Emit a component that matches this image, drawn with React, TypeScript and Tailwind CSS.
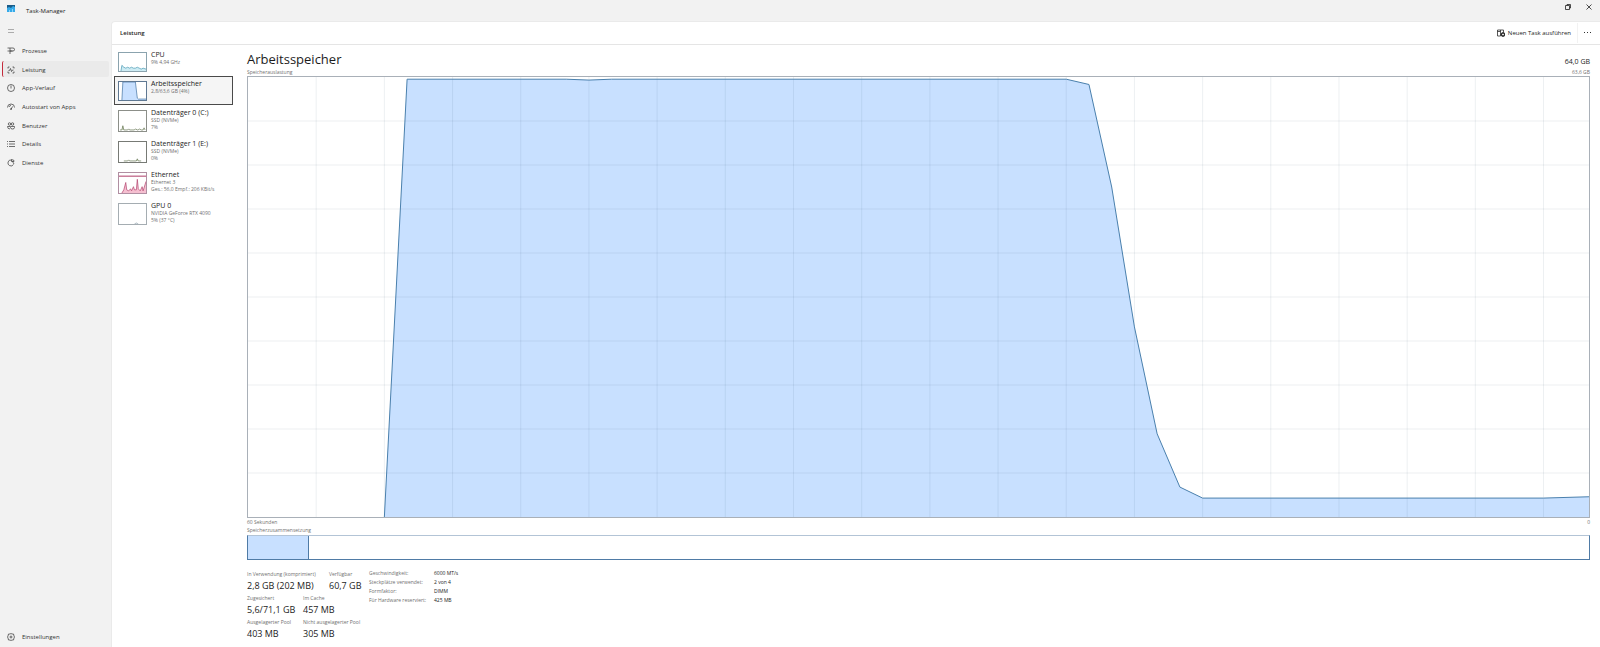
import type { ReactNode } from "react";

interface NavItem {
  label: string;
  icon: ReactNode;
}

interface Device {
  name: string;
  lines: string[];
  border: string;
  stroke: string;
  fill: string;
  line: string;
  area: string;
  limit?: string;
}

interface Stat {
  label: string;
  value: string;
}

const Icon = ({ children }: { children: ReactNode }) => (
  <svg
    className="size-[8px] shrink-0"
    viewBox="0 0 16 16"
    fill="none"
    stroke="currentColor"
    strokeWidth="1.4"
    aria-hidden="true"
  >
    {children}
  </svg>
);

const navItems: NavItem[] = [
  {
    label: "Prozesse",
    icon: (
      <Icon>
        <path d="M1 2h11a3 3 0 0 1 0 6H1M6 2v12M6 8h5" />
      </Icon>
    ),
  },
  {
    label: "Leistung",
    icon: (
      <Icon>
        <path d="M2 5V2h3M11 2h3v3M14 11v3h-3M5 14H2v-3M3 9h2l2-4 2 6 2-3h2" />
      </Icon>
    ),
  },
  {
    label: "App-Verlauf",
    icon: (
      <Icon>
        <circle cx="8" cy="8" r="7" />
        <path d="M8 3v6" />
      </Icon>
    ),
  },
  {
    label: "Autostart von Apps",
    icon: (
      <Icon>
        <path d="M1 9a7 7 0 0 1 14 0M4 8a4 4 0 0 1 4-3M8 13l3-6" />
        <circle cx="8" cy="12" r="1" />
      </Icon>
    ),
  },
  {
    label: "Benutzer",
    icon: (
      <Icon>
        <circle cx="5" cy="4" r="2.500" />
        <circle cx="11" cy="4" r="2.500" />
        <path d="M6 14q-5 0-5-5h5M7 9h8v2q0 3-4 3t-4-3z" />
      </Icon>
    ),
  },
  {
    label: "Details",
    icon: (
      <Icon>
        <path d="M0 3h2M4 3h12M0 8h2M4 8h12M0 13h2M4 13h12" />
      </Icon>
    ),
  },
  {
    label: "Dienste",
    icon: (
      <Icon>
        <path d="M9 2A6 6 0 1 0 13 11M9 1v4h5V3l-2-1zM11 5l3 5" />
      </Icon>
    ),
  },
];

const devices: Device[] = [
  {
    name: "CPU",
    lines: ["9% 4,94 GHz"],
    border: "border-[#8ba3ae]",
    stroke: "#3f94b0",
    fill: "#cdebf3",
    line: "M2 19L3 13L5 15L7 16L9 15L11 16L13 15L15 16L17 16L19 15L21 16L23 17L25 16L28 17",
    area: "M2 19L3 13L5 15L7 16L9 15L11 16L13 15L15 16L17 16L19 15L21 16L23 17L25 16L28 17V19Z",
  },
  {
    name: "Arbeitsspeicher",
    lines: ["2,8/63,6 GB (4%)"],
    border: "border-[#5f7892]",
    stroke: "#3d6d9e",
    fill: "#c8e0ff",
    line: "M3 19L4 0H17L19 17L20 18H28",
    area: "M3 19L4 0H17L19 17L20 18H28V19Z",
  },
  {
    name: "Datenträger 0 (C:)",
    lines: ["SSD (NVMe)", "7%"],
    border: "border-[#8c8f89]",
    stroke: "#657551",
    fill: "#dce7cf",
    line: "M1 18H3L4 14L5 18H9L10 17L11 18H16L17 17L19 18H20L21 17L23 18H25L26 16L27 18",
    area: "M3 18L4 14L5 18Z",
  },
  {
    name: "Datenträger 1 (E:)",
    lines: ["SSD (NVMe)", "0%"],
    border: "border-[#777a75]",
    stroke: "#657551",
    fill: "#dce7cf",
    line: "M5 18H9L10 17L11 18H18L19 16L20 18H23",
    area: "M18 18L19 16L20 18Z",
  },
  {
    name: "Ethernet",
    lines: ["Ethernet 3", "Ges.: 56,0 Empf.: 206 KBit/s"],
    border: "border-[#b08fa2]",
    stroke: "#b3446f",
    fill: "#f5bfd0",
    line: "M3 19L5 16L7 9L8 16L10 17L12 15L13 17L15 13L16 16L18 16L19 6L20 15L22 17L24 13L25 17L27 11L28 8",
    area: "M3 19L5 16L7 9L8 16L10 17L12 15L13 17L15 13L16 16L18 16L19 6L20 15L22 17L24 13L25 17L27 11L28 8V19Z",
    limit: "M0 3H28",
  },
  {
    name: "GPU 0",
    lines: ["NVIDIA GeForce RTX 4090", "5% (37 °C)"],
    border: "border-[#a5adb2]",
    stroke: "#9aa8b0",
    fill: "#e5edf1",
    line: "M16 19L18 18L20 19",
    area: "M16 19L18 18L20 19Z",
  },
];

const statRows: Stat[][] = [
  [
    { label: "In Verwendung (komprimiert)", value: "2,8 GB (202 MB)" },
    { label: "Verfügbar", value: "60,7 GB" },
  ],
  [
    { label: "Zugesichert", value: "5,6/71,1 GB" },
    { label: "Im Cache", value: "457 MB" },
  ],
  [
    { label: "Ausgelagerter Pool", value: "403 MB" },
    { label: "Nicht ausgelagerter Pool", value: "305 MB" },
  ],
];

const specs: Stat[] = [
  { label: "Geschwindigkeit:", value: "6000 MT/s" },
  { label: "Steckplätze verwendet:", value: "2 von 4" },
  { label: "Formfaktor:", value: "DIMM" },
  { label: "Für Hardware reserviert:", value: "425 MB" },
];

// one sample per second, x in samples and y in tenths of a percent from the top
const usage =
  "6,1000 7,5 14,5 15,7 16,5 36,5 37,17 38,250 39,568 40,811 41,932 42,957 57,957 59,954";

const TitleBar = () => (
  <header className="flex h-[21px] shrink-0 items-center pl-[7px]">
    <svg className="mb-[5px] h-[7px] w-[8px]" viewBox="0 0 8 7" aria-hidden="true">
      <path d="M0 0h8v3H0z" fill="#1a5b87" />
      <path d="M0 3l2-1 2 1 2-2 2 1v5H0z" fill="#36a9e8" />
      <path d="M2 5h1v2H2zM5 4h1v3H5z" fill="#8bd5fa" />
    </svg>
    <span className="mt-[2px] ml-[11px] text-[6px]">Task-Manager</span>
    <div className="mb-[7px] ml-auto flex gap-[15px] pr-[8px]">
      <button aria-label="Verkleinern">
        <svg className="size-[6px]" viewBox="0 0 12 12" fill="none" stroke="#222" strokeWidth="1.6">
          <path d="M1 3h8v8H1zM4 3V1h7v7H9" />
        </svg>
      </button>
      <button aria-label="Schließen">
        <svg className="size-[6px]" viewBox="0 0 12 12" fill="none" stroke="#222" strokeWidth="1.6">
          <path d="M1 1l10 10M11 1L1 11" />
        </svg>
      </button>
    </div>
  </header>
);

const Sidebar = () => (
  <aside className="flex w-[111px] shrink-0 flex-col text-[#333]">
    <button className="flex h-[20px] items-center pl-[7px] text-[#999]" aria-label="Navigation öffnen">
      <svg className="size-[8px]" viewBox="0 0 8 8" stroke="currentColor" aria-hidden="true">
        <path d="M1 2.500h6M1 5.500h6" strokeWidth="0.8" />
      </svg>
    </button>
    <nav className="grid h-[131px] grid-rows-7">
      {navItems.map(({ label, icon }) => (
        <a
          key={label}
          href="#"
          className={`my-px mr-[2px] ml-[2px] flex items-center gap-[7px] rounded-[2px] border-l pt-px pl-[4px] text-[6px] leading-[10px] whitespace-nowrap ${
            label === "Leistung" ? "border-[#c42b3c] bg-[#eaeaea]" : "border-transparent"
          }`}
        >
          {icon}
          {label}
        </a>
      ))}
    </nav>
    <a
      href="#"
      className="mt-auto mb-[3px] flex h-[14px] items-center gap-[7px] pl-[7px] text-[6px]"
    >
      <Icon>
        <path d="M6 2l2-1 2 1 3 0 1 4 1 2-1 2-1 4-3 0-2 1-2-1-3 0-1-4-1-2 1-2 1-4z" />
        <circle cx="8" cy="8" r="2" />
      </Icon>
      Einstellungen
    </a>
  </aside>
);

const Thumbnail = ({ device }: { device: Device }) => (
  <svg
    className={`w-[29px] shrink-0 border bg-white ${device.border} ${
      device.lines.length > 1 ? "h-[22px]" : "h-[20px]"
    }`}
    viewBox="0 0 28 19"
    preserveAspectRatio="none"
    fill="none"
    aria-hidden="true"
  >
    <path d={device.area} fill={device.fill} />
    <path d={device.line} stroke={device.stroke} strokeWidth="0.7" />
    {device.limit && <path d={device.limit} stroke={device.stroke} />}
  </svg>
);

const DeviceList = () => (
  <div className="flex w-[119px] shrink-0 flex-col pt-[2px]">
    {devices.map((device) => (
      <button
        key={device.name}
        className={`flex items-start gap-[4px] border pt-[4px] pl-[3px] text-left whitespace-nowrap ${
          device.name === "Arbeitsspeicher"
            ? "border-[#4a4a4a] bg-[#f5f5f5]"
            : "border-transparent"
        } ${device.lines.length > 1 ? "h-[31px]" : "h-[29px]"}`}
      >
        <Thumbnail device={device} />
        <span className="-mt-px flex flex-col">
          <span className="text-[7px] leading-[8px]">{device.name}</span>
          {device.lines.map((line) => (
            <span key={line} className="text-[5px] leading-[7px] text-[#707070]">
              {line}
            </span>
          ))}
        </span>
      </button>
    ))}
  </div>
);

const UsageChart = () => (
  <svg
    className="min-h-0 w-full flex-1 border border-[#a9b0b8]"
    viewBox="0 0 59 1000"
    preserveAspectRatio="none"
    role="img"
    aria-label="Speicherauslastung"
  >
    <polygon points={`${usage} 59,1000`} fill="#c8e0ff" />
    {[...Array(19)].map((_, i) => (
      <path
        key={i}
        d={`M${(i + 1) * 3} 0V1000`}
        stroke="#1e3c5a"
        strokeOpacity="0.08"
        vectorEffect="non-scaling-stroke"
      />
    ))}
    {[...Array(9)].map((_, i) => (
      <path
        key={i}
        d={`M0 ${(i + 1) * 100}H59`}
        stroke="#1e3c5a"
        strokeOpacity="0.08"
        vectorEffect="non-scaling-stroke"
      />
    ))}
    <polyline
      points={usage}
      fill="none"
      stroke="#4a80ad"
      vectorEffect="non-scaling-stroke"
    />
  </svg>
);

const StatBlock = ({ label, value }: Stat) => (
  <div>
    <dt className="text-[5px] leading-[10px] text-[#707070]">{label}</dt>
    <dd className="text-[9px] leading-[13px]">{value}</dd>
  </div>
);

const Stats = () => (
  <div className="mt-[9px] mb-[7px] flex whitespace-nowrap">
    <div className="flex w-[122px] shrink-0 flex-col gap-px">
      {statRows.map((row, i) => (
        <dl
          key={row[0].label}
          className={`grid ${i === 0 ? "grid-cols-[82px_auto]" : "grid-cols-[56px_auto]"}`}
        >
          {row.map((stat) => (
            <StatBlock key={stat.label} {...stat} />
          ))}
        </dl>
      ))}
    </div>
    <table className="self-start text-left text-[5px] leading-[9px]">
      <tbody>
        {specs.map(({ label, value }) => (
          <tr key={label}>
            <th className="w-[65px] p-0 font-normal text-[#707070]">{label}</th>
            <td className="p-0">{value}</td>
          </tr>
        ))}
      </tbody>
    </table>
  </div>
);

const MemoryPanel = () => (
  <section className="flex min-w-0 flex-1 flex-col pt-[6px] pr-[10px] pl-[14px]">
    <div className="flex items-end justify-between">
      <h2 className="text-[13px] leading-[17px]">Arbeitsspeicher</h2>
      <span className="text-[7px] leading-[12px]">64,0 GB</span>
    </div>
    <div className="flex justify-between text-[5px] leading-[8px] text-[#707070]">
      <span>Speicherauslastung</span>
      <span>63,6 GB</span>
    </div>
    <UsageChart />
    <div className="flex justify-between text-[5px] leading-[8px] text-[#707070]">
      <span>60 Sekunden</span>
      <span>0</span>
    </div>
    <p className="text-[5px] leading-[9px] text-[#707070]">Speicherzusammensetzung</p>
    <div className="flex h-[25px] shrink-0 border border-[#4f7ba6] border-t-[#b3c4d6]">
      <div className="w-[61px] border-r border-[#4f7ba6] bg-[#c8e0ff]" />
    </div>
    <Stats />
  </section>
);

const App = () => (
  <div className="flex h-screen flex-col overflow-hidden bg-[#f2f2f2] font-['Open_Sans','Noto_Sans',sans-serif] text-[#1c1c1c]">
    <TitleBar />
    <div className="flex min-h-0 flex-1">
      <Sidebar />
      <main className="flex min-w-0 flex-1 flex-col rounded-tl-[4px] border-t border-l border-[#eaeaea] bg-white">
        <div className="flex h-[23px] shrink-0 items-center border-b border-[#e5e5e5] pr-[8px] pl-[8px]">
          <h1 className="text-[6px] font-semibold">Leistung</h1>
          <button className="ml-auto flex items-center gap-[3px] text-[6px]">
            <svg className="size-[8px]" viewBox="0 0 16 16" fill="none" stroke="#222" strokeWidth="1.500" aria-hidden="true">
              <path d="M7 14H1V2h12v5M1 5h6M7 2v12" />
              <circle cx="12" cy="11" r="4" fill="#222" />
              <path d="M12 9v4M10 11h4" stroke="#fff" />
            </svg>
            Neuen Task ausführen
          </button>
          <span className="mx-[6px] h-[20px] border-l border-[#f2f2f2]" />
          <button aria-label="Weitere Optionen">
            <svg className="size-[8px]" viewBox="0 0 8 8" fill="#333">
              <path d="M0 3h1v1H0zM3 3h1v1H3zM6 3h1v1H6z" />
            </svg>
          </button>
        </div>
        <div className="flex min-h-0 flex-1 pl-[2px]">
          <DeviceList />
          <MemoryPanel />
        </div>
      </main>
    </div>
  </div>
);

export default App;
